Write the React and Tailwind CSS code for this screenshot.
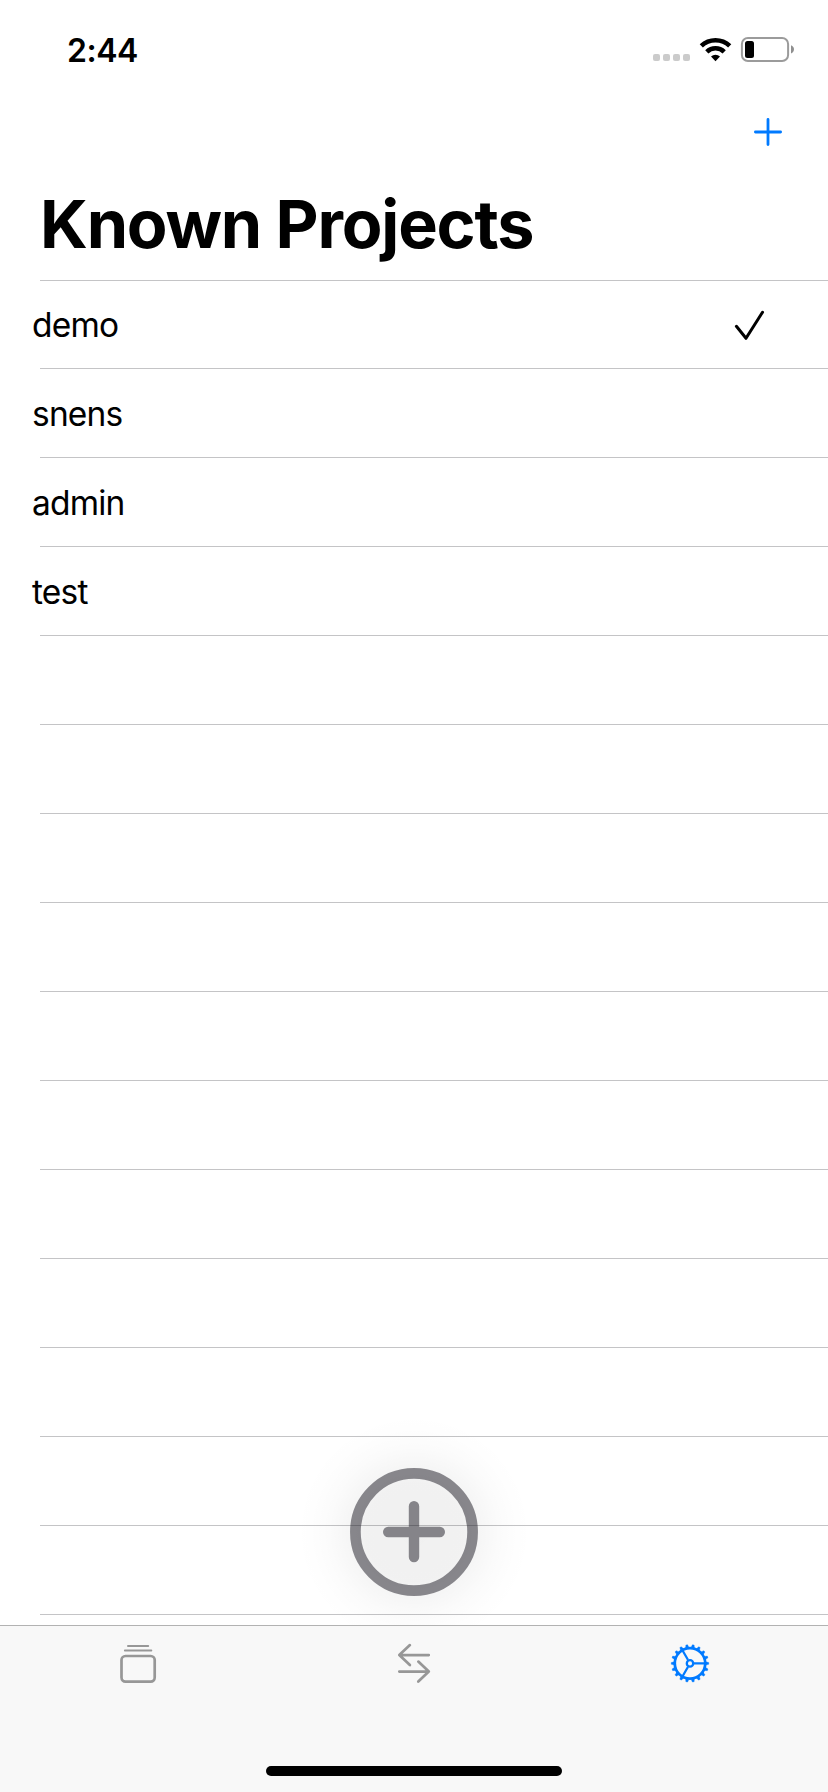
const projects = [
  { name: 'demo', selected: true },
  { name: 'snens' },
  { name: 'admin' },
  { name: 'test' },
];
const emptyRows = Array.from({ length: 11 });
const teeth = Array.from({ length: 18 }, (_, i) => i * 20);

function StatusBar() {
  return (
    <div className="flex h-[98px] shrink-0 items-center justify-between pl-[67px] pr-[33px]">
      <span className="pt-[3px] text-[32px] font-semibold leading-none tracking-[-0.5px]">2:44</span>
      <svg className="h-[28px] w-[144px]" viewBox="651 35 144 28" fill="none">
        <g fill="#cbcbcb">
          <rect x="653" y="54" width="7" height="7" rx="2" />
          <rect x="663" y="54" width="7" height="7" rx="2" />
          <rect x="673" y="54" width="7" height="7" rx="2" />
          <rect x="683" y="54" width="7" height="7" rx="2" />
        </g>
        <g stroke="#000" strokeWidth="4.6">
          <path d="M701.3 45.9a20.6 20.6 0 0 1 28.4 0" />
          <path d="M706.8 51.8a12.5 12.5 0 0 1 17.4 0" />
        </g>
        <path d="M715.5 61.2L711 56.6a6.6 6.6 0 0 1 9 0z" fill="#000" />
        <rect x="741.9" y="38" width="46.2" height="23" rx="6" stroke="#9b9b9b" strokeWidth="2" />
        <rect x="745" y="41" width="9" height="17" rx="2.5" fill="#000" />
        <path d="M791 45.2c4 1.6 4 6.6 0 8.2z" fill="#8f8f8f" />
      </svg>
    </div>
  );
}

function Row({ name, selected }) {
  return (
    <div className="relative flex h-[89px] shrink-0 items-center justify-between pl-[32px] pr-[63px] after:absolute after:bottom-0 after:left-[40px] after:right-0 after:h-px after:bg-[#c4c4c6]">
      <span className="pt-[3px] text-[33.5px] leading-none tracking-[-0.8px]">{name}</span>
      {selected && (
        <svg className="h-[32px] w-[32px]" viewBox="733 309 32 32" fill="none" stroke="#000" strokeWidth="3" strokeLinecap="round" strokeLinejoin="round">
          <path d="M736.4 326.3L746 338.3L762.5 312.3" />
        </svg>
      )}
    </div>
  );
}

function AddButton() {
  return (
    <button aria-label="Add" className="absolute left-[294px] top-[1412px] h-[240px] w-[240px]">
      <svg className="h-full w-full" viewBox="-120 -120 240 240" fill="none">
        <defs>
          <radialGradient id="glow">
            <stop offset="0" stopOpacity="0.058" />
            <stop offset="0.42" stopOpacity="0.054" />
            <stop offset="0.56" stopOpacity="0.036" />
            <stop offset="0.72" stopOpacity="0.016" />
            <stop offset="0.87" stopOpacity="0.005" />
            <stop offset="1" stopOpacity="0" />
          </radialGradient>
        </defs>
        <circle r="118" fill="url(#glow)" />
        <circle r="58.6" stroke="#1a1822" strokeOpacity="0.5" strokeWidth="10.7" />
        <path
          d="M-5.2 -5.2V-25.8a5.2 5.2 0 0 1 10.4 0V-5.2H25.8a5.2 5.2 0 0 1 0 10.4H5.2V25.0a5.2 5.2 0 0 1 -10.4 0V5.2H-25.8a5.2 5.2 0 0 1 0 -10.4z"
          fill="#1a1822"
          fillOpacity="0.5"
        />
      </svg>
    </button>
  );
}

function TabBar() {
  return (
    <nav className="relative flex h-[167px] shrink-0 flex-col items-center justify-between border-t border-[#b2b2b2] bg-[#f8f8f8] pb-[16px] pt-[14px]">
      <div className="grid w-full grid-cols-3 justify-items-center">
        <svg className="h-[48px] w-[48px]" viewBox="114 1640 48 48" fill="none" stroke="#979797" strokeLinecap="round">
          <path d="M128 1645.9H148.2M124.9 1650.6H151.3" strokeWidth="2" />
          <rect x="121.5" y="1656" width="33.2" height="25.6" rx="4" strokeWidth="2.7" />
        </svg>
        <svg className="h-[48px] w-[48px]" viewBox="390 1640 48 48" fill="none" stroke="#979797" strokeWidth="2.7" strokeLinecap="round" strokeLinejoin="round">
          <path d="M428.8 1655.1H399.3M409.9 1645.1L399.3 1655.1L409.9 1665.1" />
          <path d="M399.3 1671.6H428.8M418.3 1661.6L428.8 1671.6L418.3 1681.6" />
        </svg>
        <svg className="h-[48px] w-[48px]" viewBox="-24 -23.4 48 48" fill="none" stroke="#007aff" strokeWidth="2.3">
          <circle r="15.2" strokeWidth="2.7" />
          <circle r="3.2" />
          <path d="M4 0H15M-2 -3.5L-7.5 -13M-2 3.5L-7.5 13" strokeWidth="2.1" />
          {teeth.map((a) => (
            <path key={a} d="M15.8 -1.7L18.8 -0.9V0.9L15.8 1.7z" transform={`rotate(${a})`} fill="#007aff" strokeWidth="0.3" />
          ))}
        </svg>
      </div>
      <div className="h-[10px] w-[296px] rounded-full bg-black" />
    </nav>
  );
}

export default function App() {
  return (
    <div className="relative flex h-[1792px] w-[828px] flex-col overflow-hidden bg-white font-['Inter','Liberation_Sans',sans-serif] text-black">
      <StatusBar />
      <div className="flex h-[68px] shrink-0 items-center justify-end pr-[44px]">
        <svg className="h-[32px] w-[32px]" viewBox="-16 -16 32 32" stroke="#007aff" strokeWidth="2.8" strokeLinecap="round">
          <path d="M-12.6 0H12.6M0 -12.6V12.6" />
        </svg>
      </div>
      <h1 className="flex h-[114px] shrink-0 items-center pl-[40px] pt-[3px] text-[66.5px] font-bold leading-none tracking-[-1.2px]">Known Projects</h1>
      <main className="-mb-px flex h-[1346px] shrink-0 flex-col overflow-hidden">
        <div className="ml-[40px] h-px shrink-0 bg-[#c4c4c6]" />
        <div className="-mt-px flex flex-col">
          {projects.map((p) => (
            <Row key={p.name} name={p.name} selected={p.selected} />
          ))}
          {emptyRows.map((_, i) => (
            <Row key={i} />
          ))}
        </div>
      </main>
      <AddButton />
      <TabBar />
    </div>
  );
}
